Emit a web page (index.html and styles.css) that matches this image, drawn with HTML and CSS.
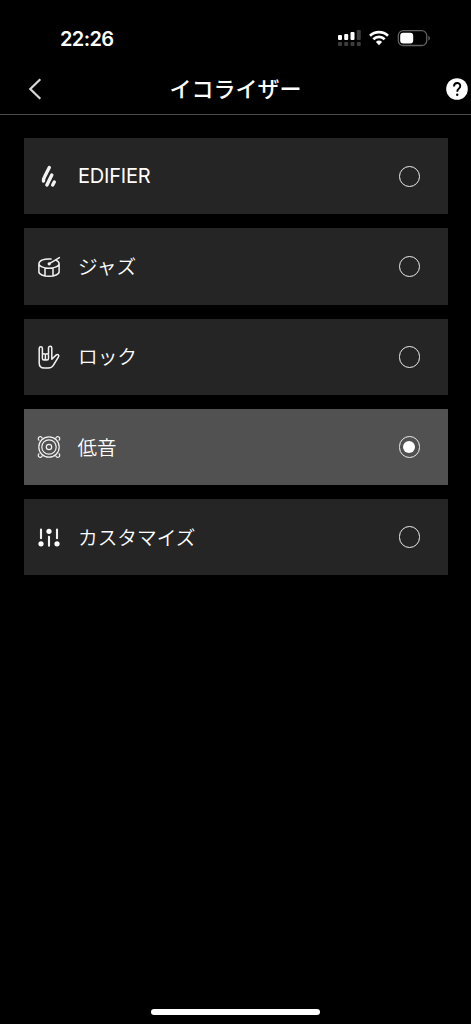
FILE: index.html
```html
<!DOCTYPE html>
<html lang="ja">
<head>
<meta charset="utf-8">
<meta name="viewport" content="width=device-width">
<title>イコライザー</title>
<link rel="stylesheet" href="styles.css">
</head>
<body>
<div class="status">
  <span class="time">22:26</span>
  <svg class="status-icons" width="94" height="20" viewBox="0 0 94 20">
    <g fill="#fff"><rect x="1" y="7" width="4" height="5" rx="1"/><rect x="7.2" y="6" width="4" height="6" rx="1"/><rect x="13.5" y="4" width="4" height="8" rx="1"/></g>
    <g fill="#3c3c3c"><rect x="19.8" y="2" width="4" height="10" rx="1"/><rect x="1" y="14" width="4" height="4" rx="1"/><rect x="7.2" y="14" width="4" height="4" rx="1"/><rect x="13.5" y="14" width="4" height="4" rx="1"/><rect x="19.8" y="14" width="4" height="4" rx="1"/></g>
    <g fill="none" stroke="#fff" stroke-width="2.7"><path d="M33 7.7a13 13 0 0 1 18 0"/><path d="M36.3 11.2a8.2 8.2 0 0 1 11.4 0"/></g>
    <path d="M38.9 14a4.6 4.6 0 0 1 6.2 0L42 17.2z" fill="#fff"/>
    <rect x="61.3" y="2.7" width="28.4" height="14.8" rx="4.8" fill="none" stroke="#606060" stroke-width="1.3"/>
    <rect x="63.2" y="4.7" width="13" height="10.8" rx="3" fill="#fff"/>
    <path d="M91.4 7.7c2 .8 2 4 0 4.8z" fill="#606060"/>
  </svg>
</div>
<header class="header">
  <svg class="back" width="16" height="24" viewBox="0 0 16 24"><path d="M13.3 2.2 3.3 12l10 9.8" fill="none" stroke="#d8d8d8" stroke-width="2.2"/></svg>
  <h1 class="title">イコライザー</h1>
  <svg class="help" width="22" height="22" viewBox="0 0 22 22"><circle cx="11" cy="11" r="10.8" fill="#fff"/><path d="M8 8.5C8 4 14.3 4 14.3 8c0 2.5-3.1 2.9-3.1 5.7" fill="none" stroke="#000" stroke-width="1.9"/><circle cx="11.2" cy="16.7" r="1.2"/></svg>
</header>
<main class="list">
  <div class="row">
    <svg class="icon" viewBox="0 0 24 24"><path d="M12.3 3.4 7.6 12.7Q6.3 15.1 6.5 17M14.8 11.1 9.9 21M17.3 18l-1.6 3" stroke-width="3.4"/></svg>
    <span class="label latin">EDIFIER</span><span class="radio"></span>
  </div>
  <div class="row">
    <svg class="icon" viewBox="0 0 24 24"><path d="M14 4.1C7.6 3.3 1.9 5.4 1.9 8.7c0 2.6 4.5 4.5 10.1 4.5s10.1-1.9 10.1-4.5c0-1.4-1-2.5-2.8-3.3M1.9 8.7v8.1c0 2.6 4.5 4.5 10.1 4.5s10.1-1.9 10.1-4.5V8.7M8 13v8M16 13v8M12.4 8.6l10-6"/><circle cx="12.2" cy="8.8" r=".9" fill="#eee"/></svg>
    <span class="label">ジャズ</span><span class="radio"></span>
  </div>
  <div class="row">
    <svg class="icon" viewBox="0 0 24 24"><path d="M5.4 9V3.4c0-2.1-3.2-2.1-3.2 0V18c0 3 2 5 5 5h4.2c2.3 0 4-.9 5.1-3l5-8.2c1-1.7-.8-3-2.2-1.9l-4.5 4.4V3c0-2.3-3.3-2.3-3.3 0v6M5.4 9v4.4c0 2 3 2 3 0V10c0-1.7-3-1.7-3 0m3 3.5c0 2 3.1 2 3.1 0V10c0-1.7-3.1-1.7-3.1 0"/></svg>
    <span class="label">ロック</span><span class="radio"></span>
  </div>
  <div class="row selected">
    <svg class="icon thin" viewBox="0 0 24 24"><circle cx="12" cy="12" r="10.2"/><circle cx="12" cy="12" r="7.2"/><circle cx="12" cy="12" r="2.7"/><path d="M2 5.2A2 2 0 1 1 5.2 3.2M18.8 3.2A2 2 0 1 1 22 5.2M2 18.8A2 2 0 1 0 5.2 20.8M18.8 20.8A2 2 0 1 0 22 18.8"/></svg>
    <span class="label kanji">低音</span><span class="radio"></span>
  </div>
  <div class="row">
    <svg class="icon" viewBox="0 0 24 24"><path d="M4 4.5v8.8M12 11.8v8.9M20 4.5v8.8" stroke-width="2.1"/><g fill="#fff" stroke="none"><circle cx="4" cy="18.8" r="2.6"/><circle cx="12" cy="6.3" r="2.6"/><circle cx="20" cy="18.8" r="2.6"/></g></svg>
    <span class="label">カスタマイズ</span><span class="radio"></span>
  </div>
</main>
<div class="home"></div>
</body>
</html>
```
FILE: styles.css
```css
* { box-sizing: border-box; }
body {
  margin: 0;
  height: 1024px;
  overflow: hidden;
  display: flex;
  flex-direction: column;
  background: #000;
  color: #fff;
  font-family: "Inter", "Noto Sans CJK JP", sans-serif;
}
svg { display: block; flex: none; }
.status {
  height: 64px;
  padding: 28px 40.5px 0 60px;
  display: flex;
  justify-content: space-between;
}
.time { font-size: 20px; line-height: 22px; font-weight: 600; letter-spacing: -0.6px; }
.header {
  height: 51px;
  padding: 0 3px 0 27px;
  display: flex;
  align-items: center;
  justify-content: space-between;
  border-bottom: 1px solid #4b4b4b;
}
.title {
  margin: 0 18px 4px 0;
  font: 500 22px/32px "Noto Sans CJK JP", sans-serif;
}
.list {
  padding: 23.3px 23.5px 0;
  display: flex;
  flex-direction: column;
  gap: 14px;
}
.row {
  height: 76.2px;
  padding: 0 27.5px 0 13.5px;
  display: flex;
  align-items: center;
  background: #252525;
}
.selected { background: #515151; }
.icon {
  width: 24px;
  height: 24px;
  fill: none;
  stroke: #f2f2f2;
  stroke-width: 1.5;
  stroke-linecap: round;
  stroke-linejoin: round;
}
.thin { stroke-width: 1.2; }
.label {
  flex: 1;
  margin-left: 17px;
  padding-bottom: 1px;
  font: 350 19.7px/30px "Noto Sans CJK JP", sans-serif;
}
.kanji { margin-left: 16.5px; padding-bottom: 0; font-size: 19.5px; }
.latin { padding: 0; font: 400 20px/30px "Inter", sans-serif; letter-spacing: -0.2px; }
.radio {
  width: 21.5px;
  height: 21.5px;
  border: 1.5px solid #eee;
  border-radius: 50%;
  display: grid;
  place-items: center;
}
.selected .radio::after {
  content: "";
  width: 12px;
  height: 12px;
  border-radius: 50%;
  background: #fff;
}
.home {
  width: 169px;
  height: 6px;
  margin: auto auto 9px 151px;
  border-radius: 3px;
  background: #fff;
}
```
